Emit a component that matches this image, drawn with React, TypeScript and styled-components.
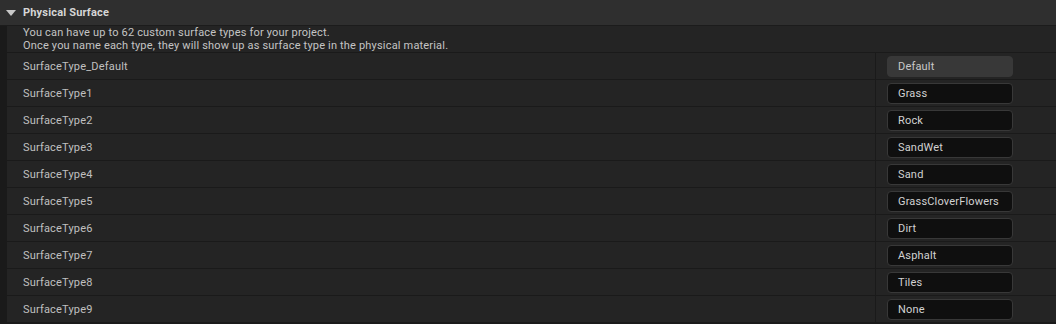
import React from 'react';
import styled, { createGlobalStyle } from 'styled-components';

const GlobalStyle = createGlobalStyle`
  html, body {
    margin: 0;
    padding: 0;
    background: #1c1c1c;
  }
  * { box-sizing: border-box; }
`;

const Panel = styled.div`
  width: 1056px;
  height: 324px;
  background: #1a1a1a;
  font-family: Roboto, "Noto Sans", sans-serif;
  font-size: 11px;
  letter-spacing: 0.18px;
  color: #c0c0c0;
  overflow: hidden;
`;

const Header = styled.div`
  height: 26px;
  display: flex;
  align-items: center;
  gap: 7px;
  padding-left: 6px;
  background: #2f2f2f;
  border-bottom: 1px solid #1c1c1c;
  color: #d6d6d6;
  font-weight: 700;
`;

const Arrow = styled.span`
  width: 0;
  height: 0;
  border-left: 5px solid transparent;
  border-right: 5px solid transparent;
  border-top: 6px solid #c8c8c8;
`;

const Desc = styled.div`
  height: 27px;
  margin-left: 7px;
  padding: 1px 0 0 16px;
  background: #242424;
  border-bottom: 1px solid #1a1a1a;
  line-height: 12.5px;
  color: #c4c4c4;
`;

const Row = styled.div`
  height: 27px;
  margin-left: 7px;
  display: grid;
  grid-template-columns: 869px 1fr;
  background: #242424;
  border-bottom: 1px solid #1a1a1a;
`;

const Name = styled.div`
  display: flex;
  align-items: center;
  padding-left: 16px;
  border-right: 1px solid #1a1a1a;
`;

const Value = styled.div`
  display: flex;
  align-items: center;
  padding-left: 11px;
`;

const Field = styled.div<{ $default?: boolean }>`
  width: 126px;
  height: 21px;
  display: flex;
  align-items: center;
  padding-left: 10px;
  border-radius: 4px;
  background: ${({ $default }) => ($default ? '#383838' : '#0f0f0f')};
  border: 1px solid #383838;
  color: ${({ $default }) => ($default ? '#c8c8c8' : '#d2d2d2')};
`;

const types = [
  ['SurfaceType_Default', 'Default'],
  ['SurfaceType1', 'Grass'],
  ['SurfaceType2', 'Rock'],
  ['SurfaceType3', 'SandWet'],
  ['SurfaceType4', 'Sand'],
  ['SurfaceType5', 'GrassCloverFlowers'],
  ['SurfaceType6', 'Dirt'],
  ['SurfaceType7', 'Asphalt'],
  ['SurfaceType8', 'Tiles'],
  ['SurfaceType9', 'None'],
];

export default function App() {
  return (
    <Panel>
      <GlobalStyle />
      <Header>
        <Arrow />
        Physical Surface
      </Header>
      <Desc>
        You can have up to 62 custom surface types for your project.
        <br />
        Once you name each type, they will show up as surface type in the physical material.
      </Desc>
      {types.map(([name, value], i) => (
        <Row key={name}>
          <Name>{name}</Name>
          <Value>
            <Field $default={i === 0}>{value}</Field>
          </Value>
        </Row>
      ))}
    </Panel>
  );
}
